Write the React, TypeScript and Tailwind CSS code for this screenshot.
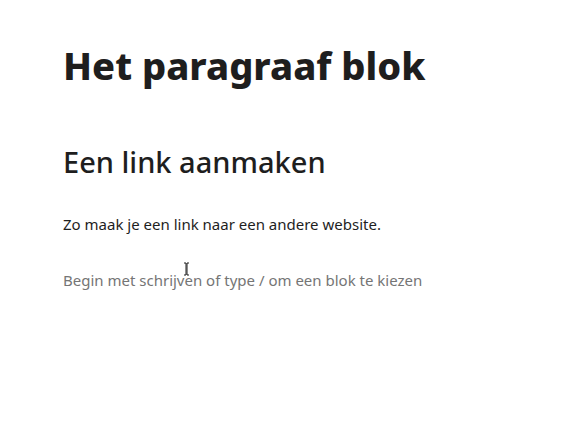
import React from "react";

function IBeam() {
  return (
    <svg
      className="absolute left-[183px] top-[262px]"
      width="7"
      height="14"
      viewBox="0 0 7 14"
      fill="none"
    >
      <path d="M0.5 0.5h2.5v13H0.5M6.5 0.5H4v13h2.5" stroke="#ffffff" strokeWidth="1" />
      <path d="M1 1h2v12H1M6 1H4v12h2" stroke="#1e1e1e" strokeWidth="1" />
    </svg>
  );
}

export default function App() {
  return (
    <div className="relative w-[566px] h-[442px] bg-white font-['Noto_Sans','Open_Sans',sans-serif] text-[#1e1e1e]">
      <div className="flex flex-col pl-[63px] pt-[40px]">
        <h1 className="text-[38px] font-extrabold leading-[50px] tracking-[0px]">Het paragraaf blok</h1>
        <h2 className="mt-[52px] text-[29px] font-medium leading-[40px]">Een link aanmaken</h2>
        <p className="mt-[30px] text-[15px] leading-[24px]">Zo maak je een link naar een andere website.</p>
        <p className="mt-[32px] text-[15px] leading-[24px] text-[#757575]">
          Begin met schrijven of type / om een blok te kiezen
        </p>
      </div>
      <IBeam />
    </div>
  );
}
